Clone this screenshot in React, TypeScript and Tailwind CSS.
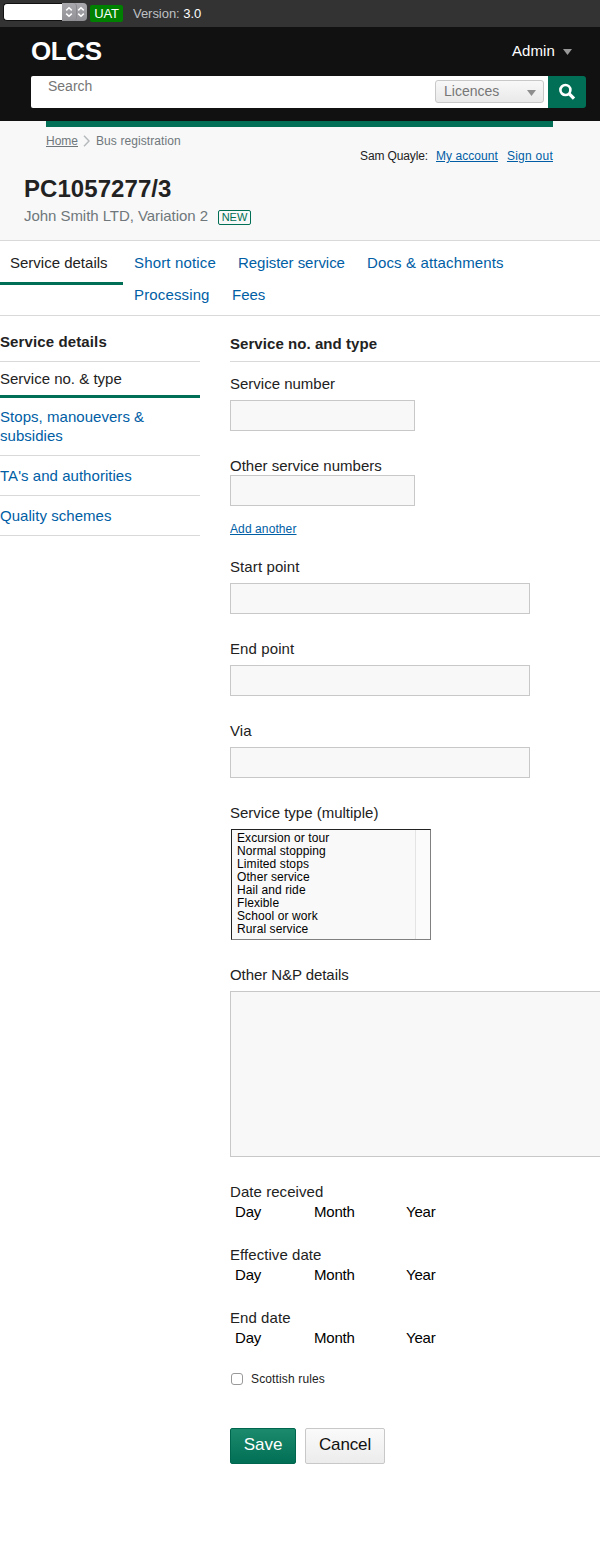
import React from "react";

const tabsTop = [
  { label: "Short notice", cls: "w-[104px] tracking-[0.16px]" },
  { label: "Register service", cls: "w-[129px] tracking-[-0.04px]" },
  { label: "Docs & attachments", cls: "w-[150px] tracking-[0.14px]" },
];

const serviceTypes = [
  "Excursion or tour",
  "Normal stopping",
  "Limited stops",
  "Other service",
  "Hail and ride",
  "Flexible",
  "School or work",
  "Rural service",
];

function Field({ label }: { label: string }) {
  return (
    <label className="mb-[25px] block">
      <span className="mb-1.5 block h-5 tracking-[0.1px]">{label}</span>
      <input className="block h-[31px] w-[300px] border border-[#c8c8c8] bg-[#f8f8f8] outline-none" />
    </label>
  );
}

function DateRow({ label }: { label: string }) {
  return (
    <div className="mb-[23px]">
      <div className="h-5 tracking-[0.06px]">{label}</div>
      <div className="flex h-5 pl-[5px] tracking-[-0.2px] text-black">
        <span className="w-[79px]">Day</span>
        <span className="w-[92px]">Month</span>
        <span>Year</span>
      </div>
    </div>
  );
}

function Stepper() {
  return (
    <svg width="8" height="12" viewBox="0 0 8 12" fill="none" stroke="#fff" strokeWidth="1.5" className="shrink-0">
      <path d="M1.2 4.4 4 1.7l2.8 2.7M1.2 7.6 4 10.3l2.8-2.7" />
    </svg>
  );
}

export default function App() {
  return (
    <div className="h-[1566px] w-[600px] overflow-hidden bg-white font-['Liberation_Sans',Arial,sans-serif] text-[15px] leading-5 text-[#222]">
      <div className="flex h-[27px] items-start bg-[#333] pl-[3px] text-[13px]">
        <div className="mt-[3px] flex h-[18px] w-[84px]">
          <div className="w-[59px] rounded-l-[4px] border border-r-0 border-[#111] bg-white" />
          <div className="flex w-[25px] rounded-r-[4px] bg-[linear-gradient(#aaa9ae,#919095)]">
            <div className="flex w-[15px] items-center justify-center rounded-r-[4px] border-r border-[#8a898e]">
              <Stepper />
            </div>
            <div className="flex w-[10px] items-center pr-1">
              <Stepper />
            </div>
          </div>
        </div>
        <span className="mt-[5px] ml-[3px] h-[17px] w-[33px] rounded-[2px] bg-[#008000] text-center leading-[18px] tracking-[-0.2px] text-white">
          UAT
        </span>
        <span className="mt-[5px] ml-[10px] leading-[18px] tracking-[-0.04px] text-[#bfc1c3]">
          Version: <span className="text-white">3.0</span>
        </span>
      </div>

      <header className="h-[94px] bg-[#111] pr-[14px] pl-[31px] text-white">
        <div className="flex h-[49px] items-center justify-between pr-[14px] pb-[2px]">
          <span className="text-[26px] leading-[46px] font-bold tracking-[-0.4px]">OLCS</span>
          <span className="flex items-center gap-2 tracking-[0.1px]">
            Admin
            <svg width="9" height="6" viewBox="0 0 9 6" className="mt-[3px]">
              <path d="M0 0h9L4.5 6z" fill="#999" />
            </svg>
          </span>
        </div>
        <div className="flex h-8">
          <span className="flex-1 rounded-l-[2px] bg-white pl-[17px] text-[14px] leading-[21px] text-[#767676]">Search</span>
          <div className="bg-white pt-1 pr-1">
            <div className="flex h-[23px] w-[109px] items-center justify-between rounded-[3px] border border-[#c8c8c8] bg-[linear-gradient(#f8f8f8,#e9e9e9)] pr-[7px] pb-px pl-2 text-[14px] text-[#767676]">
              Licences
              <svg width="9" height="6" viewBox="0 0 9 6" className="mt-1">
                <path d="M0 0h9L4.5 6z" fill="#8e8e8e" />
              </svg>
            </div>
          </div>
          <div className="flex w-[38px] items-center justify-center rounded-r-[3px] bg-[#006f55]">
            <svg width="18" height="18" viewBox="0 0 18 18" fill="none" stroke="#fff">
              <circle cx="7.4" cy="7" r="5" strokeWidth="2.6" />
              <path d="m10.8 10.4 5.2 5.2" strokeWidth="3.3" />
            </svg>
          </div>
        </div>
      </header>

      <section className="h-[120px] border-b border-[#d9d9d9] bg-[#f8f8f8]">
        <div className="mx-[46px] mr-[47px] h-1.5 bg-[#006f55]" />
        <nav className="flex h-5 items-center pt-2 pl-[46px] text-[12px] text-[#6f777b]">
          <a className="underline underline-offset-[1px]">Home</a>
          <svg width="7" height="12" viewBox="0 0 7 12" fill="none" stroke="#b5b9bb" strokeWidth="1.4" className="mr-[6px] ml-[5px]">
            <path d="m1 .7 5 5.3-5 5.3" />
          </svg>
          <span className="tracking-[0.09px]">Bus registration</span>
        </nav>
        <div className="-mt-px flex h-[27px] justify-end pr-[47px] text-[12px]">
          <span className="mr-[8px] tracking-[-0.13px]">Sam Quayle:</span>
          <a className="mr-[9px] tracking-[0.06px] text-[#005ea5] underline underline-offset-[1px]">My account</a>
          <a className="tracking-[0.25px] text-[#005ea5] underline underline-offset-[1px]">Sign out</a>
        </div>
        <h1 className="pl-6 text-[24px] leading-8 font-bold tracking-[0.06px]">PC1057277/3</h1>
        <div className="flex items-start pl-6 text-[#6f777b]">
          <span className="w-[185px] leading-[22px] tracking-[-0.05px]">John Smith LTD, Variation 2</span>
          <span className="mt-[5px] ml-[9px] h-[15px] w-[33px] rounded-[2px] border border-[#006f55] text-center text-[11px] leading-[13px] text-[#006f55]">
            NEW
          </span>
        </div>
      </section>

      <nav className="flex h-[75px] border-b border-[#d9d9d9] text-[#005ea5]">
        <div className="h-11 w-[123px] border-b-[3px] border-[#006f55] pt-3 pl-[10px] text-[#222]">Service details</div>
        <div className="pt-3 pl-[11px]">
          <div className="flex h-8">
            {tabsTop.map((t) => (
              <a key={t.label} className={t.cls}>{t.label}</a>
            ))}
          </div>
          <div className="flex">
            <a className="w-[98px] tracking-[0.14px]">Processing</a>
            <a>Fees</a>
          </div>
        </div>
      </nav>

      <div className="flex">
        <aside className="w-[200px] shrink-0">
          <h2 className="h-[46px] border-b border-[#d9d9d9] pt-4 font-bold tracking-[0.12px]">Service details</h2>
          <div className="h-9 border-b-[3px] border-[#006f55] pt-[7px]">Service no. &amp; type</div>
          <nav className="tracking-[0.04px] text-[#005ea5]">
            <div className="h-[58px] border-b border-[#d9d9d9] pt-[9px] leading-[19px]">
              Stops, manouevers &amp;<br />subsidies
            </div>
            <div className="h-10 border-b border-[#d9d9d9] pt-[10px]">TA's and authorities</div>
            <div className="h-10 border-b border-[#d9d9d9] pt-[10px]">Quality schemes</div>
          </nav>
        </aside>

        <main className="ml-[30px] w-[400px] shrink-0">
          <h2 className="mb-3 h-[46px] border-b border-[#d9d9d9] pt-[18px] font-bold tracking-[0.06px]">Service no. and type</h2>
          <label className="mb-[25px] block">
            <span className="mb-1.5 block h-5">Service number</span>
            <input className="block h-[31px] w-[185px] border border-[#c8c8c8] bg-[#f8f8f8] outline-none" />
          </label>
          <label className="block">
            <span className="block h-[19px]">Other service numbers</span>
            <input className="block h-[31px] w-[185px] border border-[#c8c8c8] bg-[#f8f8f8] outline-none" />
          </label>
          <a className="mt-[13px] mb-[18px] block h-5 text-[12px] tracking-[0.1px] text-[#005ea5] underline underline-offset-[1px]">Add another</a>
          <Field label="Start point" />
          <Field label="End point" />
          <Field label="Via" />
          <div className="mb-[6px] h-5">Service type (multiple)</div>
          <div className="ml-px flex h-[111px] w-[200px] border border-t-[#222] border-r-[#808080] border-b-[#808080] border-l-[#222] bg-[#f9f9f9] text-[12px] leading-[13px] tracking-[0.1px] text-black">
            <ul className="w-[184px] border-r border-[#e4e4e4] pt-[2px] pl-[5px]">
              {serviceTypes.map((s) => (
                <li key={s}>{s}</li>
              ))}
            </ul>
            <div className="flex-1 bg-[#fbfbfb]" />
          </div>
          <label className="mt-[25px] block">
            <span className="mb-1.5 block h-5 tracking-[-0.07px]">Other N&amp;P details</span>
            <div className="mb-[25px] h-[166px] border border-r-0 border-[#c8c8c8] bg-[#f8f8f8]" />
          </label>
          <DateRow label="Date received" />
          <DateRow label="Effective date" />
          <DateRow label="End date" />
          <label className="-mt-[2px] flex h-5 items-center text-[12px] tracking-[0.14px]">
            <span className="mr-2 ml-px h-3 w-3 rounded-[3px] border border-[#999] bg-white" />
            Scottish rules
          </label>
          <div className="mt-[39px] flex gap-[9px] text-center text-[17px] leading-[30px]">
            <button className="h-9 w-[66px] rounded-[2px] border border-[#00664e] bg-[linear-gradient(#1c8a6c,#006f55)] pb-[3px] text-white">Save</button>
            <button className="h-9 w-20 rounded-[2px] border border-[#c8c8c8] bg-[linear-gradient(#fafafa,#ececec)] pb-[3px] tracking-[-0.15px] text-[#111]">Cancel</button>
          </div>
        </main>
      </div>
    </div>
  );
}
